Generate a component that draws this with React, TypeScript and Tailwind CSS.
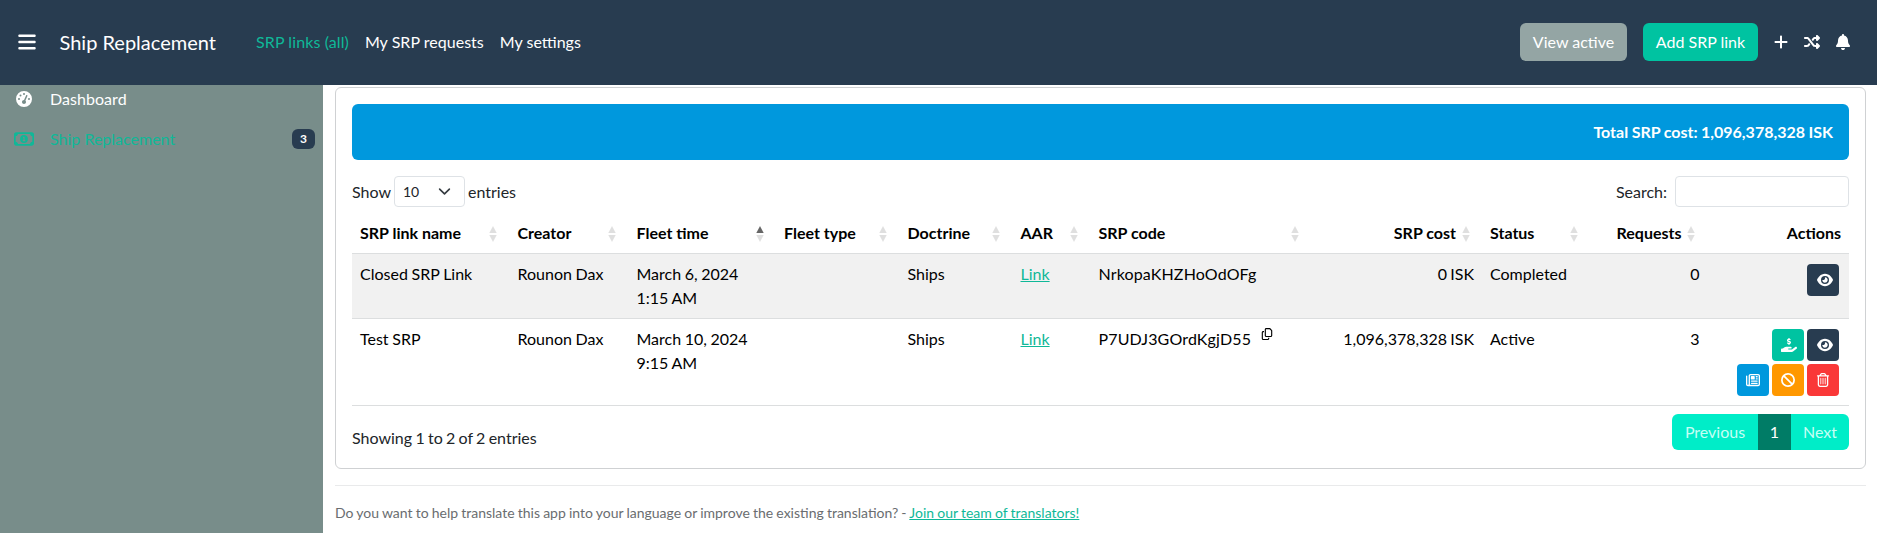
import React from "react";
import {
  FaBan,
  FaBars,
  FaBell,
  FaEye,
  FaGaugeHigh,
  FaHandHoldingDollar,
  FaPlus,
  FaRegCopy,
  FaRegMoneyBill1,
  FaRegNewspaper,
  FaRegTrashCan,
  FaShuffle,
} from "react-icons/fa6";

type Sort = "none" | "asc";

function SortIcon({ sort }: { sort: Sort }) {
  return (
    <svg width="8" height="16" viewBox="0 0 8 16" className="absolute top-[13px] right-[12.5px]">
      <path d="M4 0 L7.7 7 H0.3 Z" fill="#000" opacity={sort === "asc" ? 0.6 : 0.125} />
      <path d="M4 16 L0.3 9 H7.7 Z" fill="#000" opacity={0.125} />
    </svg>
  );
}

const columns: { label: string; width: string; right?: boolean; sort?: Sort }[] = [
  { label: "SRP link name", width: "w-[157.5px]", sort: "none" },
  { label: "Creator", width: "w-[119px]", sort: "none" },
  { label: "Fleet time", width: "w-[147.5px]", sort: "asc" },
  { label: "Fleet type", width: "w-[123.5px]", sort: "none" },
  { label: "Doctrine", width: "w-[113px]", sort: "none" },
  { label: "AAR", width: "w-[78px]", sort: "none" },
  { label: "SRP code", width: "w-[220.5px]", sort: "none" },
  { label: "SRP cost", width: "w-[171px]", right: true, sort: "none" },
  { label: "Status", width: "w-[108.5px]", sort: "none" },
  { label: "Requests", width: "w-[117px]", right: true, sort: "none" },
  { label: "Actions", width: "w-[141.5px]", right: true },
];

const tones = {
  dark: "bg-[#283c50]",
  green: "bg-[#00c3a1]",
  blue: "bg-[#0098dd]",
  orange: "bg-[#ff9800]",
  red: "bg-[#fa3838]",
};

function Action({ tone, children }: { tone: keyof typeof tones; children: React.ReactNode }) {
  return (
    <button className={`flex h-8 w-8 items-center justify-center rounded text-sm text-white ${tones[tone]}`}>
      {children}
    </button>
  );
}

function ViewAction() {
  return (
    <Action tone="dark">
      <FaEye size={16} className="ml-[3px]" />
    </Action>
  );
}

type Row = {
  name: string;
  date: string;
  time: string;
  code: string;
  copy?: boolean;
  cost: string;
  status: string;
  requests: number;
  actions: React.ReactNode;
};

const rows: Row[] = [
  {
    name: "Closed SRP Link",
    date: "March 6, 2024",
    time: "1:15 AM",
    code: "NrkopaKHZHoOdOFg",
    cost: "0 ISK",
    status: "Completed",
    requests: 0,
    actions: <ViewAction />,
  },
  {
    name: "Test SRP",
    date: "March 10, 2024",
    time: "9:15 AM",
    code: "P7UDJ3GOrdKgjD55",
    copy: true,
    cost: "1,096,378,328 ISK",
    status: "Active",
    requests: 3,
    actions: (
      <>
        <div className="flex gap-[3px]">
          <Action tone="green"><FaHandHoldingDollar size={16} className="ml-0.5" /></Action>
          <ViewAction />
        </div>
        <div className="flex gap-[3px]">
          <Action tone="blue"><FaRegNewspaper /></Action>
          <Action tone="orange"><FaBan /></Action>
          <Action tone="red"><FaRegTrashCan /></Action>
        </div>
      </>
    ),
  },
];

export default function App() {
  return (
    <div className="flex h-[533px] flex-col overflow-hidden bg-white font-['Lato',sans-serif] text-base text-[#212529]">
      <header className="flex h-[85px] shrink-0 items-center bg-[#283c50] pb-[1.5px] text-white">
        <FaBars size={20} className="ml-[17px]" />
        <span className="ml-[22.5px] w-[196.5px] text-xl">Ship Replacement</span>
        <nav className="flex gap-4">
          <a className="tracking-[0.1px] text-[#0fb898]">SRP links (all)</a>
          <a className="tracking-[0.03px]">My SRP requests</a>
          <a>My settings</a>
        </nav>
        <div className="mr-[26px] ml-auto flex items-center">
          <button className="h-[38px] w-[107px] rounded-md bg-[#94a5a4]">View active</button>
          <button className="ml-4 h-[38px] w-[115px] rounded-md bg-[#00c3a1]">Add SRP link</button>
          <FaPlus className="ml-[15px]" />
          <FaShuffle className="ml-[15px]" />
          <FaBell className="ml-[15px]" />
        </div>
      </header>

      <div className="flex min-h-0 grow">
        <aside className="w-[323px] shrink-0 bg-[#788d8a] text-white">
          <a className="flex h-7 items-center pl-4">
            <FaGaugeHigh />
            <span className="ml-[18px] tracking-[0.05px]">Dashboard</span>
          </a>
          <a className="mt-1.5 flex h-10 items-center pr-2 pl-[14px] text-[#0fb898]">
            <FaRegMoneyBill1 className="h-4.5 w-5" />
            <span className="ml-4">Ship Replacement</span>
            <span className="ml-auto flex h-5 w-[23px] items-center justify-center rounded-md bg-[#283c50] text-xs font-bold text-white">
              3
            </span>
          </a>
        </aside>

        <main className="grow pt-0.5 pr-[11px] pl-3">
          <section className="h-[382px] rounded-md border border-[#cfd1d3] p-4">
            <div className="flex h-14 items-center justify-end rounded-md bg-[#0098dd] px-4 font-bold text-white [word-spacing:-0.4px]">
              Total SRP cost: 1,096,378,328 ISK
            </div>

            <div className="mt-4 flex h-[31px] items-center justify-between">
              <div className="flex items-center">
                Show
                <div className="mr-[3px] ml-[3px] flex h-[31px] w-[71px] items-center justify-between rounded border border-[#dee2e6] pr-[13px] pl-2 text-sm">
                  10
                  <svg width="13" height="13" viewBox="0 0 16 16" fill="none" stroke="#343a40" strokeWidth="2" strokeLinecap="round" strokeLinejoin="round">
                    <path d="m2 5 6 6 6-6" />
                  </svg>
                </div>
                entries
              </div>
              <label className="flex items-center gap-2">
                Search:
                <input className="h-[31px] w-[174px] rounded border border-[#dee2e6]" />
              </label>
            </div>

            <table className="mt-1.5 w-[1497px] table-fixed border-separate border-spacing-0 text-black">
              <thead>
                <tr className="h-[41px]">
                  {columns.map((c) => (
                    <th
                      key={c.label}
                      className={`relative border-b border-[#dcdedf] py-2 pl-2 font-bold whitespace-nowrap ${c.width} ${c.right ? "text-right" : "text-left"} ${c.sort ? "pr-[26px]" : "pr-2"}`}
                    >
                      {c.label}
                      {c.sort && <SortIcon sort={c.sort} />}
                    </th>
                  ))}
                </tr>
              </thead>
              <tbody className="[&_td]:border-b [&_td]:border-[#dcdedf] [&_td]:p-2 [&_td]:align-top [&_tr:first-child]:bg-[#f1f1f1]">
                {rows.map((r) => (
                  <tr key={r.name}>
                    <td className="[word-spacing:-0.4px]">{r.name}</td>
                    <td className="[word-spacing:-0.4px]">Rounon Dax</td>
                    <td className="[word-spacing:-0.5px]">
                      {r.date}
                      <br />
                      {r.time}
                    </td>
                    <td />
                    <td>Ships</td>
                    <td>
                      <a className="text-[#0fb898] underline">Link</a>
                    </td>
                    <td>
                      <div className="flex">
                        <span className="tracking-[0.14px]">{r.code}</span>
                        {r.copy && <FaRegCopy size={12} className="mt-[1px] ml-[10px]" />}
                      </div>
                    </td>
                    <td className="text-right [word-spacing:-0.9px]">{r.cost}</td>
                    <td>{r.status}</td>
                    <td className="text-right">{r.requests}</td>
                    <td>
                      <div className="mt-0.5 mr-0.5 mb-[1px] flex flex-col items-end gap-[3px]">{r.actions}</div>
                    </td>
                  </tr>
                ))}
              </tbody>
            </table>

            <div className="mt-2 flex justify-between">
              <div className="pt-3 [word-spacing:-0.8px]">Showing 1 to 2 of 2 entries</div>
              <div className="flex h-9 overflow-hidden rounded-md bg-[#00edc8] text-[#c5fff5]">
                <span className="flex w-[86px] items-center justify-center">Previous</span>
                <span className="flex w-[33px] items-center justify-center bg-[#007c66] text-white">1</span>
                <span className="flex w-[58px] items-center justify-center">Next</span>
              </div>
            </div>
          </section>

          <footer className="mt-4 border-t border-[#e9eaeb] pt-[17px] text-sm text-[#6a6d70] [word-spacing:-0.44px]">
            Do you want to help translate this app into your language or improve the existing translation? -{" "}
            <a className="text-[#0fb898] underline">Join our team of translators!</a>
          </footer>
        </main>
      </div>
    </div>
  );
}
